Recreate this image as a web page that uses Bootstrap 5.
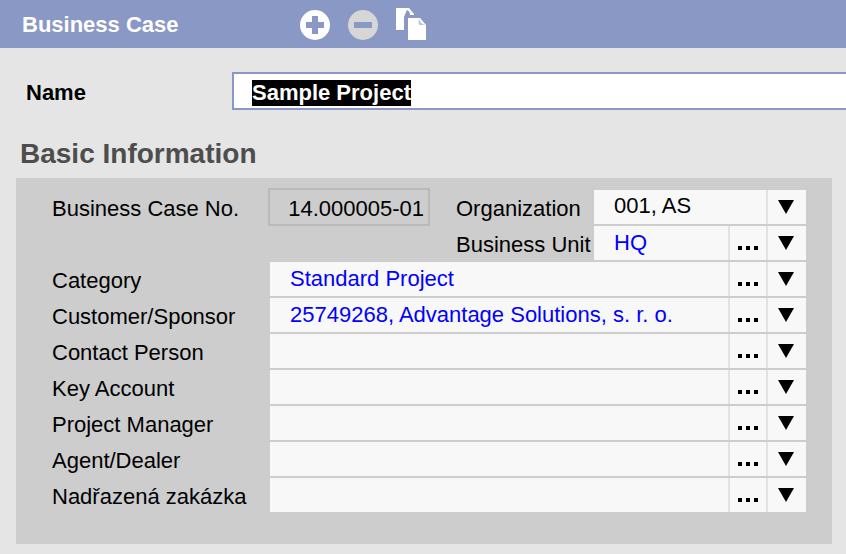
<!DOCTYPE html>
<html lang="en">
<head>
<meta charset="utf-8">
<meta name="viewport" content="width=device-width, initial-scale=1">
<title>Business Case</title>
<link href="https://cdn.jsdelivr.net/npm/bootstrap@5.3.0/dist/css/bootstrap.min.css" rel="stylesheet">
<style>
  body { background: #e5e5e5; color: #000; font: 22px/36px "Liberation Sans", Arial, sans-serif; }
  .topbar { background: #8a98c5; height: 48px; padding-left: 22px; }
  .topbar h1 { font-size: 22px; width: 278px; padding-top: 2px; }
  .tools { gap: 18px; }
  .tool { width: 30px; height: 32px; line-height: 0; }
  .name-row { padding: 24px 0 0 26px; }
  .name-row label { width: 206px; line-height: 40px; height: 38px; padding-top: 1px; }
  .name-input { height: 38px; border: 2px solid #8a98c5; border-right: 0; padding: 4px 0 0 18px; outline: 0; background: #fff; }
  .name-input::selection { background: rgba(0, 0, 0, .996); color: #fff; }
  .section-title { font-size: 28px; line-height: 36px; color: #4d4d4d; margin: 26px 20px 6px; }
  .panel { background: #cdcdcd; margin: 0 14px 10px 16px; padding: 10px 26px 32px 36px; gap: 2px; }
  .entry { height: 34px; }
  .entry label { width: 218px; line-height: 38px; }
  .top-entry > label { width: 216px; padding-top: 2px; line-height: 38px; }
  .case-no { width: 162px; height: 38px; border: 2px solid #bababa; background: transparent; padding: 4px 4px 0 0; color: #000; }
  .side { margin-left: 26px; padding-top: 2px; gap: 2px; }
  .side .entry label { width: 138px; }
  .combo { gap: 2px; background: #e2e2e2; min-width: 0; }
  .combo input, .combo button, .org { border: 0; border-radius: 0; background-color: #f8f8f8; }
  .combo input { color: #00f; padding: 0 0 0 20px; min-width: 0; }
  .combo button { padding: 0; line-height: 0; }
  .more { width: 36px; }
  .drop { width: 38px; }
  .org { appearance: none; color: #000; line-height: 26px; padding: 0 56px 2px 20px; min-width: 0;
    background-image: url("data:image/svg+xml,%3Csvg xmlns='http://www.w3.org/2000/svg' width='40' height='34'%3E%3Cpath fill='%23e2e2e2' d='M0 0h2v34H0z'/%3E%3Cpath d='M12 10h16l-8 14z'/%3E%3C/svg%3E");
    background-repeat: no-repeat; background-position: right top; }
</style>
</head>
<body>
<svg class="d-none" aria-hidden="true">
  <symbol id="dots" viewBox="0 0 36 34"><path d="M8 20h4v4H8zM16 20h4v4h-4zM24 20h4v4h-4z"/></symbol>
  <symbol id="arrow" viewBox="0 0 38 34"><path d="M10 10h16l-8 14z"/></symbol>
</svg>

<header class="topbar d-flex align-items-center text-white">
  <h1 class="fw-bold mb-0">Business Case</h1>
  <div class="tools d-flex">
    <button type="button" class="tool btn p-0 border-0 rounded-0" aria-label="Add">
      <svg width="30" height="32"><circle cx="15" cy="17" r="15" fill="#fff"/><path d="M12 8h6v6h6v6h-6v6h-6v-6H6v-6h6z" fill="#8a98c5"/></svg>
    </button>
    <button type="button" class="tool btn p-0 border-0 rounded-0" aria-label="Remove">
      <svg width="30" height="32"><circle cx="15" cy="17" r="15" fill="#d6d6d6"/><path d="M6 14h18v6H6z" fill="#8a98c5"/></svg>
    </button>
    <button type="button" class="tool btn p-0 border-0 rounded-0" aria-label="Copy">
      <svg width="30" height="32" fill="#fff"><path d="M0 0h12l-2 4-2 5v13H0z"/><path d="M11 0h2l5 6v1h-4q0-4-3-5z"/><path d="M12 10h12l6 7v15H12z"/><path d="M23 11q-1 6 1 6h5l-4-2z" fill="#b9c2df"/></svg>
    </button>
  </div>
</header>

<form>
  <div class="name-row d-flex">
    <label for="name" class="fw-bold flex-shrink-0">Name</label>
    <input id="name" type="text" class="name-input fw-bold flex-fill" value="Sample Project" autocomplete="off" spellcheck="false">
  </div>

  <h2 class="section-title fw-bold">Basic Information</h2>

  <section class="panel d-flex flex-column">
    <div class="top-entry d-flex">
      <label for="case-no" class="flex-shrink-0">Business Case No.</label>
      <input id="case-no" class="case-no text-end flex-shrink-0" type="text" value="14.000005-01" readonly>
      <div class="side d-flex flex-column flex-fill">
        <div class="entry d-flex">
          <label for="org" class="flex-shrink-0">Organization</label>
          <select id="org" class="org flex-fill"><option>001, AS</option></select>
        </div>
        <div class="entry d-flex">
          <label for="unit" class="flex-shrink-0 text-nowrap">Business Unit</label>
          <div class="combo d-flex flex-fill">
            <input id="unit" type="text" class="w-100" value="HQ">
            <button type="button" class="more flex-shrink-0" aria-label="Browse business units"><svg width="36" height="34"><use href="#dots"/></svg></button>
            <button type="button" class="drop flex-shrink-0" aria-label="Open business unit list"><svg width="38" height="34"><use href="#arrow"/></svg></button>
          </div>
        </div>
      </div>
    </div>

    <div class="entry d-flex">
      <label for="category" class="flex-shrink-0">Category</label>
      <div class="combo d-flex flex-fill">
        <input id="category" type="text" class="w-100" value="Standard Project">
        <button type="button" class="more flex-shrink-0" aria-label="Browse categories"><svg width="36" height="34"><use href="#dots"/></svg></button>
        <button type="button" class="drop flex-shrink-0" aria-label="Open category list"><svg width="38" height="34"><use href="#arrow"/></svg></button>
      </div>
    </div>
    <div class="entry d-flex">
      <label for="customer" class="flex-shrink-0">Customer/Sponsor</label>
      <div class="combo d-flex flex-fill">
        <input id="customer" type="text" class="w-100" value="25749268, Advantage Solutions, s. r. o.">
        <button type="button" class="more flex-shrink-0" aria-label="Browse customers"><svg width="36" height="34"><use href="#dots"/></svg></button>
        <button type="button" class="drop flex-shrink-0" aria-label="Open customer list"><svg width="38" height="34"><use href="#arrow"/></svg></button>
      </div>
    </div>
    <div class="entry d-flex">
      <label for="contact" class="flex-shrink-0">Contact Person</label>
      <div class="combo d-flex flex-fill">
        <input id="contact" type="text" class="w-100">
        <button type="button" class="more flex-shrink-0" aria-label="Browse contacts"><svg width="36" height="34"><use href="#dots"/></svg></button>
        <button type="button" class="drop flex-shrink-0" aria-label="Open contact list"><svg width="38" height="34"><use href="#arrow"/></svg></button>
      </div>
    </div>
    <div class="entry d-flex">
      <label for="account" class="flex-shrink-0">Key Account</label>
      <div class="combo d-flex flex-fill">
        <input id="account" type="text" class="w-100">
        <button type="button" class="more flex-shrink-0" aria-label="Browse key accounts"><svg width="36" height="34"><use href="#dots"/></svg></button>
        <button type="button" class="drop flex-shrink-0" aria-label="Open key account list"><svg width="38" height="34"><use href="#arrow"/></svg></button>
      </div>
    </div>
    <div class="entry d-flex">
      <label for="manager" class="flex-shrink-0">Project Manager</label>
      <div class="combo d-flex flex-fill">
        <input id="manager" type="text" class="w-100">
        <button type="button" class="more flex-shrink-0" aria-label="Browse managers"><svg width="36" height="34"><use href="#dots"/></svg></button>
        <button type="button" class="drop flex-shrink-0" aria-label="Open manager list"><svg width="38" height="34"><use href="#arrow"/></svg></button>
      </div>
    </div>
    <div class="entry d-flex">
      <label for="agent" class="flex-shrink-0">Agent/Dealer</label>
      <div class="combo d-flex flex-fill">
        <input id="agent" type="text" class="w-100">
        <button type="button" class="more flex-shrink-0" aria-label="Browse agents"><svg width="36" height="34"><use href="#dots"/></svg></button>
        <button type="button" class="drop flex-shrink-0" aria-label="Open agent list"><svg width="38" height="34"><use href="#arrow"/></svg></button>
      </div>
    </div>
    <div class="entry d-flex">
      <label for="parent" class="flex-shrink-0" lang="cs">Nadřazená zakázka</label>
      <div class="combo d-flex flex-fill">
        <input id="parent" type="text" class="w-100">
        <button type="button" class="more flex-shrink-0" aria-label="Browse parent orders"><svg width="36" height="34"><use href="#dots"/></svg></button>
        <button type="button" class="drop flex-shrink-0" aria-label="Open parent order list"><svg width="38" height="34"><use href="#arrow"/></svg></button>
      </div>
    </div>
  </section>
</form>
<script src="https://cdn.jsdelivr.net/npm/bootstrap@5.3.0/dist/js/bootstrap.bundle.min.js"></script>
<script>
  const nameInput = document.getElementById("name");
  nameInput.focus();
  nameInput.select();
</script>
</body>
</html>
